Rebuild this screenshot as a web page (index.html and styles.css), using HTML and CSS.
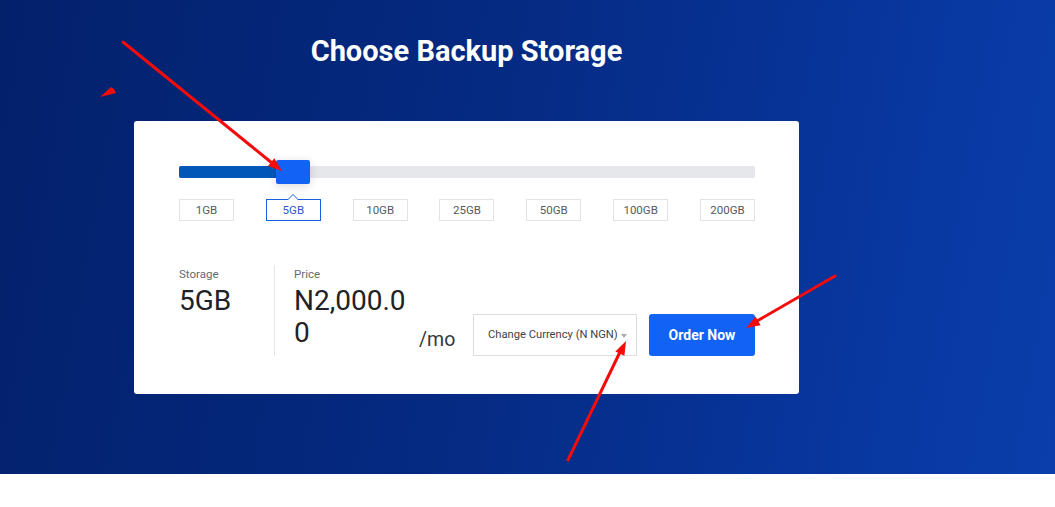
FILE: index.html
```html
<!DOCTYPE html>
<html lang="en">
<head>
<meta charset="utf-8">
<title>Choose Backup Storage</title>
<link rel="stylesheet" href="styles.css">
</head>
<body>
<section class="hero">
  <div class="container">
    <h1 class="title">Choose Backup Storage</h1>
    <div class="card">
      <div class="slider">
        <div class="track"><div class="fill"></div></div>
        <div class="thumb"></div>
      </div>
      <div class="sizes">
        <button class="size">1GB</button>
        <button class="size active">5GB</button>
        <button class="size">10GB</button>
        <button class="size">25GB</button>
        <button class="size">50GB</button>
        <button class="size">100GB</button>
        <button class="size">200GB</button>
      </div>
      <div class="summary">
        <div class="stat storage">
          <div class="label">Storage</div>
          <div class="value">5GB</div>
        </div>
        <div class="stat price">
          <div class="label">Price</div>
          <div class="value price-value">N2,000.00</div>
        </div>
        <div class="per">/mo</div>
        <div class="actions">
          <div class="currency">Change Currency (N NGN)<span class="caret"></span></div>
          <button class="order">Order Now</button>
        </div>
      </div>
    </div>
  </div>
</section>
<div class="below"></div>
<svg class="annotations" width="1055" height="507" viewBox="0 0 1055 507" xmlns="http://www.w3.org/2000/svg">
  <g stroke="#f40b0b" stroke-width="3" stroke-linecap="round" fill="none">
    <line x1="123" y1="42" x2="272" y2="163"/>
    <line x1="835" y1="276" x2="757" y2="321"/>
    <line x1="568" y1="460" x2="620" y2="352"/>
  </g>
  <g fill="#f40b0b">
    <polygon points="282,171 274.3,158.3 268,166.1"/>
    <polygon points="746,328 755.6,316.6 760.6,325.2"/>
    <polygon points="626,341 624.4,355.8 615.4,351.4"/>
    <polygon points="100,97 111,87 114,89 116,93"/>
  </g>
</svg>
</body>
</html>
```
FILE: styles.css
```css
* { box-sizing: border-box; }
html, body { margin: 0; padding: 0; }
body {
  font-family: Roboto, "Liberation Sans", Arial, sans-serif;
  background: #ffffff;
  position: relative;
  width: 1055px;
  height: 507px;
  overflow: hidden;
}
.hero {
  height: 474px;
  background: linear-gradient(100deg, #03206b 0%, #052a82 45%, #0838a2 85%, #0b3eab 100%);
  padding-top: 35px;
}
.container {
  width: 665px;
  margin-left: 134px;
}
.title {
  margin: 0;
  text-align: center;
  color: #ffffff;
  font-size: 29px;
  line-height: 32px;
  font-weight: 700;
}
.card {
  margin-top: 54px;
  background: #ffffff;
  border-radius: 3px;
  padding: 39px 44px 38px 45px;
}
.slider {
  position: relative;
  height: 24px;
  padding-top: 6px;
}
.track {
  height: 12px;
  background: #e6e7eb;
  border-radius: 2px;
  overflow: hidden;
}
.fill {
  width: 111px;
  height: 100%;
  background: #0057b7;
}
.thumb {
  position: absolute;
  left: 97px;
  top: 0;
  width: 34px;
  height: 24px;
  background: #1262f6;
  border-radius: 2px;
  box-shadow: 0 2px 10px rgba(0, 0, 0, 0.15);
}
.sizes {
  margin-top: 15px;
  display: flex;
  justify-content: space-between;
}
.size {
  position: relative;
  width: 55px;
  height: 22px;
  padding: 0;
  background: #ffffff;
  border: 1px solid #e3e3e6;
  font-family: inherit;
  font-size: 11.5px;
  color: #555a60;
}
.size.active {
  border-color: #1a5fe0;
  color: #2f55d0;
}
.size.active::before,
.size.active::after {
  content: "";
  position: absolute;
  left: 50%;
  width: 0;
  height: 0;
  border-style: solid;
  border-color: transparent;
}
.size.active::before {
  top: -6px;
  margin-left: -6px;
  border-width: 0 6px 6px 6px;
  border-bottom-color: #1a5fe0;
}
.size.active::after {
  top: -5px;
  margin-left: -5px;
  border-width: 0 5px 5px 5px;
  border-bottom-color: #ffffff;
}
.summary {
  margin-top: 44px;
  display: flex;
  align-items: flex-end;
}
.stat .label {
  font-size: 11.5px;
  line-height: 14px;
  color: #666a70;
  margin-top: 2px;
}
.stat .value {
  margin-top: 4px;
  font-size: 28px;
  line-height: 32px;
  color: #1f2227;
}
.storage {
  width: 95px;
  align-self: flex-start;
}
.price {
  height: 91px;
  border-left: 1px solid #e5e6e9;
  padding-left: 19px;
}
.price-value {
  width: 116px;
  word-break: break-all;
}
.per {
  margin-left: 9px;
  margin-bottom: 4px;
  font-size: 19.5px;
  line-height: 24px;
  color: #33363b;
}
.actions {
  margin-left: auto;
  display: flex;
  gap: 12px;
}
.currency {
  position: relative;
  width: 164px;
  height: 42px;
  border: 1px solid #dcdde0;
  padding-left: 14px;
  font-size: 11.2px;
  line-height: 40px;
  color: #3f4348;
  white-space: nowrap;
}
.caret {
  position: absolute;
  right: 9px;
  top: 19px;
  width: 0;
  height: 0;
  border-style: solid;
  border-width: 4px 3.5px 0 3.5px;
  border-color: #a8abb0 transparent transparent transparent;
}
.order {
  width: 106px;
  height: 42px;
  border: none;
  border-radius: 3px;
  background: #1262f6;
  color: #ffffff;
  font-family: inherit;
  font-size: 14px;
  font-weight: 700;
}
.annotations {
  position: absolute;
  left: 0;
  top: 0;
  pointer-events: none;
}
```
